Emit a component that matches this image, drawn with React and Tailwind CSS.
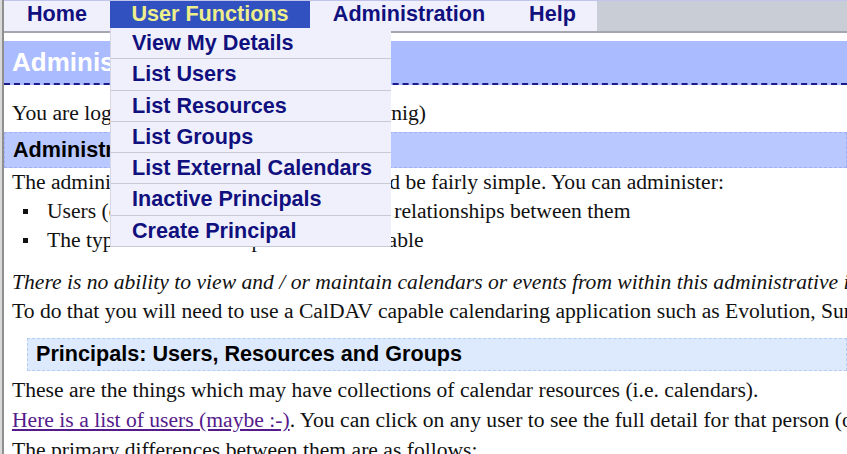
import React from 'react';

const menu = [
  { label: 'Home', w: 'w-[106px]' },
  { label: 'User Functions', w: 'w-[200px]', active: true },
  { label: 'Administration', w: 'w-[198px]' },
  { label: 'Help', w: 'w-[89px]' },
];

const submenu = [
  'View My Details',
  'List Users',
  'List Resources',
  'List Groups',
  'List External Calendars',
  'Inactive Principals',
  'Create Principal',
];

const App = () => {
  return (
    <div className="w-[847px] h-[454px] overflow-hidden bg-white flex font-['Liberation_Serif',serif] text-[21.6px] text-[#111]">
      {/* left frame edge */}
      <div className="w-[2px] bg-[#d9d9d9] shrink-0" />
      <div className="w-[2px] bg-[#8f8f8f] shrink-0" />

      <div className="flex-1 min-w-0 relative">
        {/* Menu bar */}
        <div className="h-[33px] flex bg-[#c9ced6] border-t border-[#c0c4ee] border-b-2 border-b-[#a4a7ae] font-['Liberation_Sans',sans-serif] font-bold text-[21.6px]">
          {menu.map((m) => (
            <div
              key={m.label}
              className={`${m.w} relative flex items-start justify-center ${
                m.active ? 'bg-[#3151c0] text-[#eeee8a] h-[27px]' : 'bg-[#f0f0fc] text-[#10107e]'
              }`}
            >
              <span className="leading-[25px]">{m.label}</span>
              {m.active && (
                <div className="absolute left-0 top-[27px] w-[281px] z-10 bg-[#f0f0fc] border-l border-[#d6d6e4] text-[#10107e]">
                  {submenu.map((s) => (
                    <div key={s} className="h-[31.3px] flex items-center pl-[21px] border-b border-[#c9c9d3] whitespace-nowrap">
                      {s}
                    </div>
                  ))}
                </div>
              )}
            </div>
          ))}
        </div>

        {/* Page heading */}
        <h1 className="mt-[8px] h-[44px] flex items-center pl-[8px] bg-[#aabbff] border-b-2 border-dashed border-[#1a1a8a] text-white font-['Liberation_Sans',sans-serif] font-bold text-[26px]">
          Administration
        </h1>

        <div className="pl-[8px] leading-[29px]">
          <p className="mt-[14px] whitespace-nowrap">You are logged on as Admin User (admin.wnig)</p>
        </div>

        <h2 className="mt-[4px] h-[36px] flex items-center pl-[8px] bg-[#b9c9ff] border border-dashed border-[#9fb0f2] text-black font-['Liberation_Sans',sans-serif] font-bold text-[21.6px]">
          Administration Functions
        </h2>

        <div className="pl-[8px] leading-[29px] whitespace-nowrap">
          <p>The administration of this application should be fairly simple. You can administer:</p>
          <ul>
            <li className="flex items-center">
              <span className="w-[5px] h-[5px] shrink-0 bg-[#111] ml-[11px] mr-[19px]" />
              Users (or Resources or Groups) and the relationships between them
            </li>
            <li className="flex items-center">
              <span className="w-[5px] h-[5px] shrink-0 bg-[#111] ml-[11px] mr-[19px]" />
              The types of relationships that are available
            </li>
          </ul>
          <p className="mt-[13px] italic">There is no ability to view and / or maintain calendars or events from within this administrative interface.</p>
          <p>To do that you will need to use a CalDAV capable calendaring application such as Evolution, Sunbird, Thunderbird.</p>
        </div>

        <h3 className="ml-[23px] mt-[12px] h-[33px] flex items-center pl-[8px] bg-[#dde9fd] border border-dashed border-[#b5cdf3] text-black font-['Liberation_Sans',sans-serif] font-bold text-[21.6px]">
          Principals: Users, Resources and Groups
        </h3>

        <div className="pl-[8px] leading-[30px] whitespace-nowrap mt-[4px]">
          <p>These are the things which may have collections of calendar resources (i.e. calendars).</p>
          <p>
            <a href="#" className="text-[#551a8b] underline">Here is a list of users (maybe :-)</a>. You can click on any user to see the full detail for that person (or group or resource).
          </p>
          <p>The primary differences between them are as follows:</p>
        </div>
      </div>
    </div>
  );
};

export default App;
